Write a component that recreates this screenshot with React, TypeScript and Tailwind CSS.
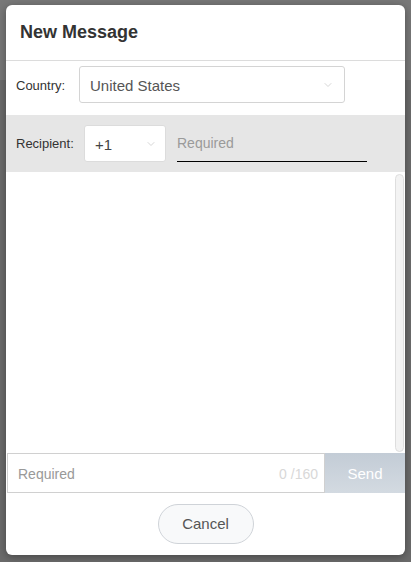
import { ChevronDown } from 'lucide-react'

const App = () => {
  return (
    <div
      className="h-[562px] w-[411px] overflow-hidden bg-[linear-gradient(#787878_80px,#6b6b6b_80px)] pt-[5px] pl-[6px]"
      style={{ fontFamily: '"Liberation Sans", Arial, sans-serif' }}
    >
      <div className="flex h-[550px] w-[399px] flex-col overflow-hidden rounded-md bg-white shadow-[0_2px_8px_rgba(0,0,0,0.35)]">
        {/* Header */}
        <div className="flex h-[56px] shrink-0 items-center border-b border-[#dcdcdc] pl-[14px]">
          <h1 className="text-[18px] font-bold text-[#333]">New Message</h1>
        </div>

        {/* Country */}
        <div className="flex shrink-0 items-center pt-[5px] pb-[12px] pl-[10px]">
          <span className="mt-[3px] w-[63px] text-[13px] text-[#333]">Country:</span>
          <div className="flex h-[37px] w-[266px] items-center justify-between rounded-[3px] border border-[#d4d4d4] pl-[10px] pr-[10px]">
            <span className="mt-[3px] text-[15px] text-[#555]">United States</span>
            <ChevronDown className="h-3 w-3 text-[#c8c8c8]" strokeWidth={1.5} />
          </div>
        </div>

        {/* Recipient */}
        <div className="flex h-[57px] shrink-0 items-center bg-[#e6e6e6] pl-[10px]">
          <span className="w-[68px] text-[13px] text-[#333]">Recipient:</span>
          <div className="flex h-[37px] w-[82px] items-center justify-between rounded-[3px] border border-[#dcdcdc] bg-white pl-[10px] pr-[8px]">
            <span className="mt-[3px] text-[15px] text-[#444]">+1</span>
            <ChevronDown className="h-3 w-3 text-[#c8c8c8]" strokeWidth={1.5} />
          </div>
          <div className="ml-[11px] flex h-[37px] w-[190px] items-center border-b-[1.5px] border-black">
            <span className="text-[14px] text-[#9a9a9a]">Required</span>
          </div>
        </div>

        {/* Message area */}
        <div className="flex min-h-0 flex-1 justify-end pt-[2px] pb-[1px] pr-[1px]">
          <div className="w-[9px] rounded-full border border-[#dedede] bg-[#f3f3f3]" />
        </div>

        {/* Input row */}
        <div className="flex h-[40px] shrink-0">
          <div className="ml-px flex flex-1 items-center justify-between border border-[#d0d0d0] pl-[10px] pr-[6px]">
            <span className="mt-[2px] text-[14px] text-[#999]">Required</span>
            <span className="mt-[2px] text-[14px] text-[#d8d8d8]">0 /160</span>
          </div>
          <button className="w-[80px] bg-[linear-gradient(#c3ccd6,#d3dae1)] pt-[2px] text-[15px] text-white">
            Send
          </button>
        </div>

        {/* Footer */}
        <div className="flex h-[62px] shrink-0 items-center justify-center">
          <button className="h-[40px] w-[96px] rounded-full border border-[#cfd3d8] bg-[#f8f9fa] text-[15px] text-[#555]">
            Cancel
          </button>
        </div>
      </div>
    </div>
  )
}

export default App
